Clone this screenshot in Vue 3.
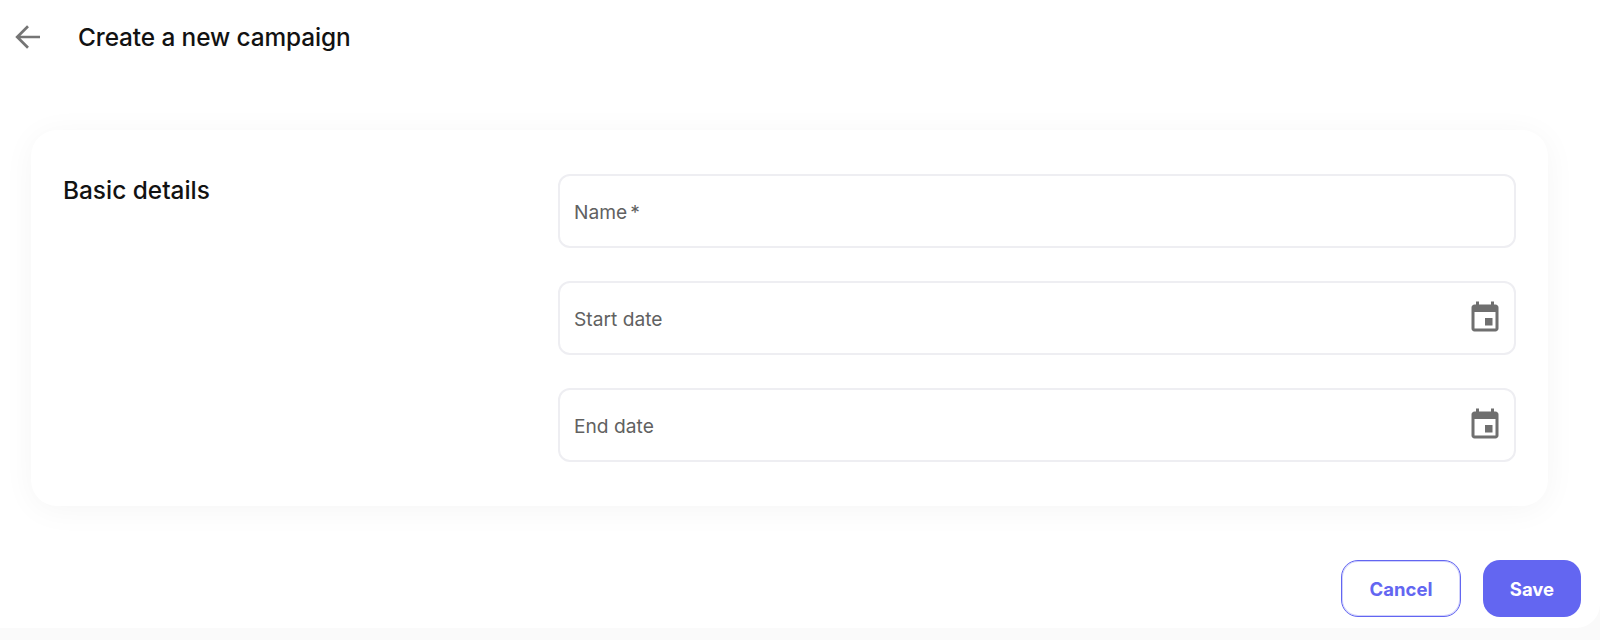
<script setup>
const fields = [
  { label: 'Name', required: true, date: false },
  { label: 'Start date', required: false, date: true },
  { label: 'End date', required: false, date: true },
]
</script>

<template>
  <div class="page">
    <main class="panel">
      <header class="header">
        <button class="back" type="button" aria-label="Back">
          <svg width="28" height="28" viewBox="0 0 28 28" fill="none">
            <path d="M26 14H3M14 3.2L3.2 14 14 24.8" stroke="#757575" stroke-width="2.7" />
          </svg>
        </button>
        <h1 class="title">Create a new campaign</h1>
      </header>

      <section class="card">
        <h2 class="section-title">Basic details</h2>
        <div class="fields">
          <div v-for="f in fields" :key="f.label" class="field">
            <span class="label">{{ f.label }}<span v-if="f.required" class="req">*</span></span>
            <svg v-if="f.date" class="cal" width="36" height="36" viewBox="0 0 24 24">
              <path fill="#6f6f6f" d="M17 12h-5v5h5v-5zM16 1v2H8V1H6v2H5c-1.11 0-1.99.9-1.99 2L3 19c0 1.1.89 2 2 2h14c1.1 0 2-.9 2-2V5c0-1.1-.9-2-2-2h-1V1h-2zm3 18H5V8h14v11z" />
            </svg>
          </div>
        </div>
      </section>

      <footer class="actions">
        <button class="btn cancel" type="button">Cancel</button>
        <button class="btn save" type="button">Save</button>
      </footer>
    </main>
  </div>
</template>

<style>
html, body { margin: 0; background: #fafafa; }
</style>

<style scoped>
.page {
  height: 640px;
  overflow: hidden;
  font-family: Inter, "Liberation Sans", sans-serif;
}
.panel {
  height: 628px;
  box-sizing: border-box;
  background: #fff;
  border-radius: 0 0 24px 0;
  padding: 0 19px 11px 31px;
  display: flex;
  flex-direction: column;
}
.header {
  height: 130px;
  margin-left: -17px;
  padding-bottom: 56px;
  box-sizing: border-box;
  display: flex;
  align-items: center;
  gap: 36px;
}
.back {
  width: 28px;
  height: 28px;
  padding: 0;
  border: 0;
  background: none;
  display: flex;
}
.title {
  margin: 0;
  font-size: 24.4px;
  font-weight: 500;
  letter-spacing: -0.1px;
  color: #121212;
}
.card {
  width: 1517px;
  height: 376px;
  box-sizing: border-box;
  background: #fff;
  border-radius: 26px;
  box-shadow: 0 4px 32px rgba(0, 0, 0, 0.045);
  padding: 44px 32px 0;
  display: flex;
}
.section-title {
  width: 495px;
  margin: 1px 0 0;
  font-size: 24.4px;
  line-height: 30px;
  font-weight: 500;
  color: #121212;
}
.fields {
  width: 958px;
  display: flex;
  flex-direction: column;
  gap: 33px;
}
.field {
  height: 74px;
  box-sizing: border-box;
  border: 2px solid #eeeef2;
  border-radius: 12px;
  padding: 0 11px 0 14px;
  display: flex;
  align-items: center;
  justify-content: space-between;
}
.label {
  font-size: 19.2px;
  line-height: 24px;
  padding-top: 2px;
  color: #616161;
}
.req {
  margin-left: 3px;
}
.actions {
  margin-top: auto;
  display: flex;
  justify-content: flex-end;
  gap: 22px;
}
.btn {
  height: 57px;
  box-sizing: border-box;
  border-radius: 17px;
  font-family: inherit;
  font-size: 18.5px;
  font-weight: 700;
}
.cancel {
  width: 120px;
  background: #fff;
  border: 1px solid #6366f1;
  box-shadow: inset 0 0 0 1px rgba(99, 102, 241, 0.3);
  color: #6366f1;
}
.save {
  width: 98px;
  background: #6366f1;
  border: 0;
  color: #fff;
}
</style>
